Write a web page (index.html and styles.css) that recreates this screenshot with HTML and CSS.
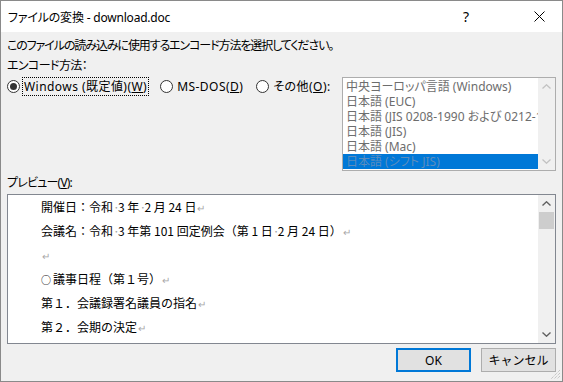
FILE: index.html
```html
<!DOCTYPE html>
<html lang="ja">
<head>
    <meta charset="UTF-8">
    <title>ファイルの変換 - download.doc</title>
    <link rel="stylesheet" href="styles.css">
</head>
<body>

<div class="dialog">
    <div class="titlebar">
        <span class="title">ファイルの変換 - download.doc</span>
        <span class="help">?</span>
        <span class="close">
            <svg width="11" height="11" viewBox="0 0 11 11"><path d="M0.5 0.5 L10.5 10.5 M10.5 0.5 L0.5 10.5" stroke="#000" stroke-width="1" fill="none"/></svg>
        </span>
    </div>

    <div class="content">
        <p class="intro">このファイルの読み込みに使用するエンコード方法を選択してください。</p>
        <div class="enc-label">エンコード方法：</div>

        <div class="enc-row">
            <div class="radios">
                <div class="radio-item">
                    <span class="radio checked"></span>
                    <span class="radio-label focused">Windows (既定値)(<u>W</u>)</span>
                </div>
                <div class="radio-item">
                    <span class="radio"></span>
                    <span class="radio-label">MS-DOS(<u>D</u>)</span>
                </div>
                <div class="radio-item">
                    <span class="radio"></span>
                    <span class="radio-label">その他(<u>O</u>):</span>
                </div>
            </div>

            <div class="listbox">
                <div class="list-items">
                    <div class="list-item">中央ヨーロッパ言語 (Windows)</div>
                    <div class="list-item">日本語 (EUC)</div>
                    <div class="list-item">日本語 (JIS 0208-1990 および 0212-1990)</div>
                    <div class="list-item">日本語 (JIS)</div>
                    <div class="list-item">日本語 (Mac)</div>
                    <div class="list-item selected">日本語 (シフト JIS)</div>
                </div>
                <div class="list-scroll">
                    <span class="arrow-box">
                        <svg width="9" height="5" viewBox="0 0 9 5"><path d="M0.5 4.5 L4.5 0.8 L8.5 4.5" stroke="#c2c2c2" stroke-width="1.3" fill="none"/></svg>
                    </span>
                    <span class="arrow-box">
                        <svg width="9" height="5" viewBox="0 0 9 5"><path d="M0.5 0.5 L4.5 4.2 L8.5 0.5" stroke="#c2c2c2" stroke-width="1.3" fill="none"/></svg>
                    </span>
                </div>
            </div>
        </div>

        <div class="preview-label">プレビュー(<u>V</u>):</div>

        <div class="preview">
            <div class="doc">
                <div class="doc-line">開催日：令和<span class="sp">·</span>3 年<span class="sp">·</span>2 月 24 日<span class="pm">↵</span></div>
                <div class="doc-line">会議名：令和<span class="sp">·</span>3 年第 101 回定例会（第 1 日<span class="sp">·</span>2 月 24 日）<span class="pm">↵</span></div>
                <div class="doc-line"><span class="pm">↵</span></div>
                <div class="doc-line"><span class="mark">○</span>議事日程（第１号）<span class="pm">↵</span></div>
                <div class="doc-line">第１．会議録署名議員の指名<span class="pm">↵</span></div>
                <div class="doc-line">第２．会期の決定<span class="pm">↵</span></div>
            </div>
            <div class="doc-scroll">
                <span class="arrow-box">
                    <svg width="9" height="5" viewBox="0 0 9 5"><path d="M0.5 4.5 L4.5 0.8 L8.5 4.5" stroke="#606060" stroke-width="1.4" fill="none"/></svg>
                </span>
                <span class="thumb"></span>
                <span class="track"></span>
                <span class="arrow-box">
                    <svg width="9" height="5" viewBox="0 0 9 5"><path d="M0.5 0.5 L4.5 4.2 L8.5 0.5" stroke="#606060" stroke-width="1.4" fill="none"/></svg>
                </span>
            </div>
        </div>

        <div class="buttons">
            <button class="btn default">OK</button>
            <button class="btn">キャンセル</button>
        </div>
    </div>

    <!-- size grip in the corner -->
    <svg class="grip" width="11" height="11" viewBox="0 0 11 11">
        <path d="M10 1 L1 10 M10 4 L4 10 M10 7 L7 10" stroke="#b4b4b4" stroke-width="1" stroke-dasharray="1 1" fill="none"/>
    </svg>
</div>

</body>
</html>
```

FILE: styles.css
```css
body {
    margin: 0;
    font-family: "Noto Sans", "Noto Sans CJK JP", sans-serif;
    font-size: 12px;
    color: #000;
}

.dialog {
    width: 563px;
    height: 382px;
    box-sizing: border-box;
    border: 1px solid #8a8a8a;
    background: #f0f0f0;
    display: flex;
    flex-direction: column;
    position: relative;
    font-feature-settings: "palt";
}

.titlebar {
    height: 31px;
    background: #fff;
    display: flex;
    align-items: center;
}

.title {
    flex: 1;
    padding-left: 7px;
    letter-spacing: -0.2px;
}

.help {
    width: 40px;
    text-align: center;
    font-size: 14px;
    margin-right: 31px;
}

.close {
    width: 45px;
    display: flex;
    justify-content: center;
}

.content {
    flex: 1;
    display: flex;
    flex-direction: column;
    padding: 6px 6px 0 6px;
}

.intro {
    margin: 0;
    line-height: 16px;
    letter-spacing: -1.1px;
}

.enc-label {
    margin-top: 4px;
    line-height: 16px;
    letter-spacing: -0.6px;
}

.enc-row {
    display: flex;
    margin-top: 3px;
}

.radios {
    flex: 1;
    display: flex;
    align-items: center;
    height: 19px;
    gap: 11px;
}

.radio-item {
    display: flex;
    align-items: center;
}

.radio {
    width: 13px;
    height: 13px;
    box-sizing: border-box;
    border: 1px solid #333;
    border-radius: 50%;
    background: #fff;
    display: flex;
    align-items: center;
    justify-content: center;
}

.radio.checked::after {
    content: "";
    width: 7px;
    height: 7px;
    border-radius: 50%;
    background: #333;
}

.radio-label {
    margin-left: 2px;
    padding: 0 1px;
    line-height: 17px;
    letter-spacing: 0.45px;
    border: 1px dotted transparent;
}

.radio-label.focused {
    border-color: #000;
}

.listbox {
    width: 214px;
    height: 94px;
    box-sizing: border-box;
    border: 1px solid #adadad;
    background: #fff;
    display: flex;
}

.list-items {
    flex: 1;
    padding-top: 1px;
    overflow: hidden;
}

.list-item {
    height: 15px;
    line-height: 15px;
    padding-left: 3px;
    white-space: nowrap;
    color: #6d6d6d;
}

.list-item.selected {
    background: #0078d7;
    color: #5d8dbd;
}

.list-scroll {
    width: 17px;
    background: #f0f0f0;
    display: flex;
    flex-direction: column;
    justify-content: space-between;
}

.arrow-box {
    width: 17px;
    height: 17px;
    display: flex;
    align-items: center;
    justify-content: center;
}

.preview-label {
    margin-top: 4px;
    line-height: 16px;
    letter-spacing: -0.8px;
}

.preview {
    margin-top: 3px;
    height: 150px;
    box-sizing: border-box;
    border: 1px solid #828790;
    background: #fff;
    display: flex;
}

.doc {
    flex: 1;
    padding-left: 33px;
    overflow: hidden;
    font-family: "Noto Sans CJK JP", sans-serif;
    font-feature-settings: normal;
}

.doc-line {
    height: 24px;
    line-height: 24px;
    white-space: nowrap;
}

.mark {
    display: inline-block;
    width: 12px;
    font-size: 10px;
}

.sp {
    display: inline-block;
    width: 5px;
    text-align: center;
    color: #a0a0a0;
}

.pm {
    color: #a8a8a8;
    font-size: 10px;
    margin-left: 1px;
}

.doc-scroll {
    width: 17px;
    background: #f0f0f0;
    display: flex;
    flex-direction: column;
}

.thumb {
    height: 17px;
    margin: 0 1px;
    background: #cdcdcd;
}

.track {
    flex: 1;
}

.buttons {
    display: flex;
    justify-content: flex-end;
    gap: 10px;
    margin-top: 4px;
}

.btn {
    width: 75px;
    height: 24px;
    box-sizing: border-box;
    border: 1px solid #adadad;
    background: #e1e1e1;
    font-family: "Noto Sans", "Noto Sans CJK JP", sans-serif;
    font-size: 12px;
    color: #000;
    padding: 0;
}

.btn.default {
    border: 2px solid #0078d7;
}

.grip {
    position: absolute;
    right: 1px;
    bottom: 1px;
}
```
